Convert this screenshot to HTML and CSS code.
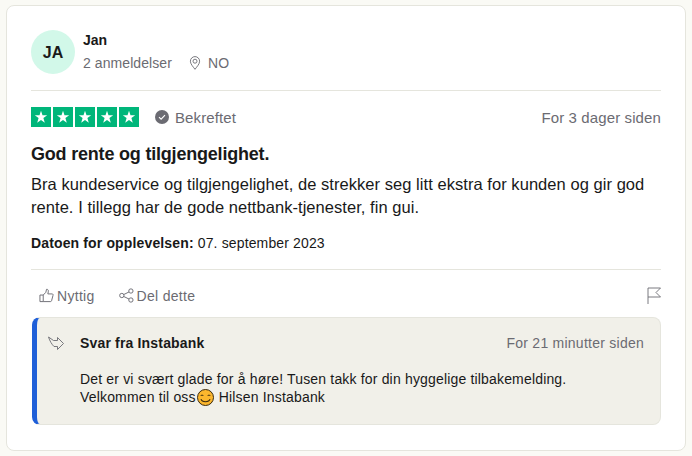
FILE: index.html
```html
<!DOCTYPE html>
<html lang="no">
<head>
    <meta charset="UTF-8">
    <title>Anmeldelse</title>
    <link rel="stylesheet" href="styles.css">
</head>
<body>
    <article class="card">
        <div class="consumer">
            <div class="avatar">JA</div>
            <div class="consumer-info">
                <div class="name">Jan</div>
                <div class="meta">
                    <span>2 anmeldelser</span>
                    <span class="location">
                        <svg class="pin" width="14" height="14" viewBox="0 0 14 14" fill="none" stroke="#6b6b72" stroke-width="0.9">
                            <path d="M7 13.3 C5 10.6 2.4 8 2.4 5.2 A4.6 4.6 0 0 1 11.6 5.2 C11.6 8 9 10.6 7 13.3Z"/>
                            <circle cx="7" cy="5.2" r="2"/>
                        </svg>
                        NO
                    </span>
                </div>
            </div>
        </div>

        <div class="rating-row">
            <div class="rating-left">
                <div class="stars">
                    <span class="star"><svg width="16" height="16" viewBox="0 0 16 16"><path fill="#fff" d="M8 1.8 9.5 6.3 14.2 6.3 10.4 9.1 11.8 13.7 8 10.9 4.2 13.7 5.6 9.1 1.8 6.3 6.5 6.3Z"/></svg></span>
                    <span class="star"><svg width="16" height="16" viewBox="0 0 16 16"><path fill="#fff" d="M8 1.8 9.5 6.3 14.2 6.3 10.4 9.1 11.8 13.7 8 10.9 4.2 13.7 5.6 9.1 1.8 6.3 6.5 6.3Z"/></svg></span>
                    <span class="star"><svg width="16" height="16" viewBox="0 0 16 16"><path fill="#fff" d="M8 1.8 9.5 6.3 14.2 6.3 10.4 9.1 11.8 13.7 8 10.9 4.2 13.7 5.6 9.1 1.8 6.3 6.5 6.3Z"/></svg></span>
                    <span class="star"><svg width="16" height="16" viewBox="0 0 16 16"><path fill="#fff" d="M8 1.8 9.5 6.3 14.2 6.3 10.4 9.1 11.8 13.7 8 10.9 4.2 13.7 5.6 9.1 1.8 6.3 6.5 6.3Z"/></svg></span>
                    <span class="star"><svg width="16" height="16" viewBox="0 0 16 16"><path fill="#fff" d="M8 1.8 9.5 6.3 14.2 6.3 10.4 9.1 11.8 13.7 8 10.9 4.2 13.7 5.6 9.1 1.8 6.3 6.5 6.3Z"/></svg></span>
                </div>
                <span class="verified">
                    <svg width="14" height="14" viewBox="0 0 14 14"><circle cx="7" cy="7" r="7" fill="#6b6b72"/><path d="M4 7.2 6.1 9.2 10 5.2" fill="none" stroke="#fff" stroke-width="1.1"/></svg>
                    Bekreftet
                </span>
            </div>
            <span class="date date-large">For 3 dager siden</span>
        </div>

        <h2 class="title">God rente og tilgjengelighet.</h2>
        <p class="text">Bra kundeservice og tilgjengelighet, de strekker seg litt ekstra for kunden og gir god rente. I tillegg har de gode nettbank-tjenester, fin gui.</p>
        <p class="experience"><b>Datoen for opplevelsen:</b> 07. september 2023</p>

        <div class="actions">
            <div class="actions-left">
                <span class="action">
                    <svg width="15" height="15" viewBox="0 0 16 16" fill="none" stroke="#6b6b72" stroke-width="1">
                        <path d="M1 7.5H4.5V14.5H1Z"/>
                        <path d="M4.5 7.5 7.3 4.6 8 1.4C9.5 1.2 10.3 2.4 9.9 4L9.4 6.3H14C15 6.3 15.3 7.3 14.9 8L13.4 13.6C13.2 14.2 12.8 14.5 12.2 14.5H4.5"/>
                    </svg>
                    Nyttig
                </span>
                <span class="action">
                    <svg width="15" height="15" viewBox="0 0 16 16" fill="none" stroke="#6b6b72" stroke-width="1">
                        <circle cx="3" cy="8" r="2.3"/>
                        <circle cx="12.7" cy="3.2" r="2.3"/>
                        <circle cx="12.7" cy="12.8" r="2.3"/>
                        <path d="M5 7 10.7 4.2M5 9 10.7 11.8"/>
                    </svg>
                    Del dette
                </span>
            </div>
            <svg class="flag" width="14" height="17" viewBox="0 0 14 17" fill="none" stroke="#6b6b72" stroke-width="0.9">
                <path d="M1 17V1H13.5L9 5.5 13.5 10H1"/>
            </svg>
        </div>

        <div class="reply">
            <svg class="reply-icon" width="16" height="15" viewBox="0 0 16 15" fill="none" stroke="#6b6b72" stroke-width="0.9">
                <path d="M0.5 1 5.5 4.5H9.5V1.5L15.5 7.5 9.5 13.5V10.5H6C3.8 8.4 1.8 5 0.5 1Z"/>
            </svg>
            <div class="reply-body">
                <div class="reply-head">
                    <b class="reply-name">Svar fra Instabank</b>
                    <span class="date">For 21 minutter siden</span>
                </div>
                <p class="reply-text">Det er vi svært glade for å høre! Tusen takk for din hyggelige tilbakemelding.<br>Velkommen til oss<svg class="smile" width="17" height="17" viewBox="0 0 17 17"><circle cx="8.5" cy="8.5" r="8" fill="#fbb62d" stroke="#3a2a10" stroke-width="1"/><path d="M3.6 7C4.2 5.8 5.8 5.8 6.5 7M10.5 7C11.2 5.8 12.8 5.8 13.4 7" fill="none" stroke="#3a2a10" stroke-width="1"/><path d="M4 10.2C5 13.6 12 13.6 13 10.2" fill="none" stroke="#3a2a10" stroke-width="1.1"/></svg> Hilsen Instabank</p>
            </div>
        </div>
    </article>
</body>
</html>
```

FILE: styles.css
```css
body {
    margin: 0;
    padding: 5px 6px;
    background-color: #fafaf5;
    font-family: "Liberation Sans", Arial, sans-serif;
    color: #191919;
    font-size: 14px;
}

.card {
    box-sizing: border-box;
    width: 680px;
    height: 446px;
    padding: 24px;
    background-color: #fff;
    border: 1px solid #e5e5dd;
    border-radius: 8px;
}

.consumer {
    display: flex;
    gap: 8px;
    height: 61px;
    border-bottom: 1px solid #e5e5dd;
    box-sizing: border-box;
}
.avatar {
    width: 44px;
    height: 44px;
    padding-top: 1px;
    box-sizing: border-box;
    border-radius: 50%;
    background-color: #d2f8e9;
    display: flex;
    align-items: center;
    justify-content: center;
    font-size: 16px;
    font-weight: bold;
}
.name {
    font-weight: bold;
    line-height: 20px;
}
.meta {
    display: flex;
    gap: 16px;
    margin-top: 3px;
    line-height: 20px;
    color: #6b6b72;
    letter-spacing: 0.08px;
}
.location {
    display: flex;
    align-items: center;
    gap: 6px;
}

.rating-row {
    display: flex;
    justify-content: space-between;
    align-items: center;
    margin-top: 16px;
    height: 20px;
}
.rating-left {
    display: flex;
    align-items: center;
    gap: 16px;
}
.stars {
    display: flex;
    gap: 2px;
}
.star {
    width: 20px;
    height: 20px;
    background-color: #00b67a;
    display: flex;
    align-items: center;
    justify-content: center;
}
.verified {
    display: flex;
    align-items: center;
    gap: 6px;
    color: #6b6b72;
    font-size: 15px;
    letter-spacing: 0.1px;
}
.date {
    color: #6b6b72;
    letter-spacing: 0.25px;
}
.date-large {
    font-size: 15px;
    letter-spacing: 0.12px;
}

.title {
    margin: 16px 0 0;
    font-size: 18px;
    line-height: 22px;
    letter-spacing: -0.2px;
}
.text {
    margin: 8px 0 0;
    font-size: 16.5px;
    line-height: 23px;
    letter-spacing: 0.05px;
}
.experience {
    margin: 14px 0 0;
    line-height: 20px;
    letter-spacing: 0.14px;
}

.actions {
    display: flex;
    justify-content: space-between;
    align-items: center;
    margin-top: 16px;
    padding: 17px 0 0 8px;
    border-top: 1px solid #e5e5dd;
}
.actions-left {
    display: flex;
    gap: 24px;
}
.action {
    display: flex;
    align-items: center;
    gap: 3px;
    color: #6b6b72;
    letter-spacing: 0.3px;
}

.reply {
    display: flex;
    gap: 16px;
    box-sizing: border-box;
    height: 108px;
    margin: 13px 0 0 1px;
    padding: 15px 16px 16px 11px;
    background-color: #f1f0e9;
    border: 1px solid #e5e5dd;
    border-left: 5px solid #1f5fd8;
    border-radius: 8px;
}
.reply-icon {
    flex: none;
    margin-top: 3px;
}
.reply-body {
    flex: 1;
}
.reply-head {
    display: flex;
    justify-content: space-between;
    line-height: 20px;
}
.reply-name {
    letter-spacing: 0.17px;
}
.reply-text {
    margin: 17px 0 0;
    line-height: 18px;
    letter-spacing: 0.17px;
}
.smile {
    vertical-align: -4px;
    margin: 0 1px;
}
```
